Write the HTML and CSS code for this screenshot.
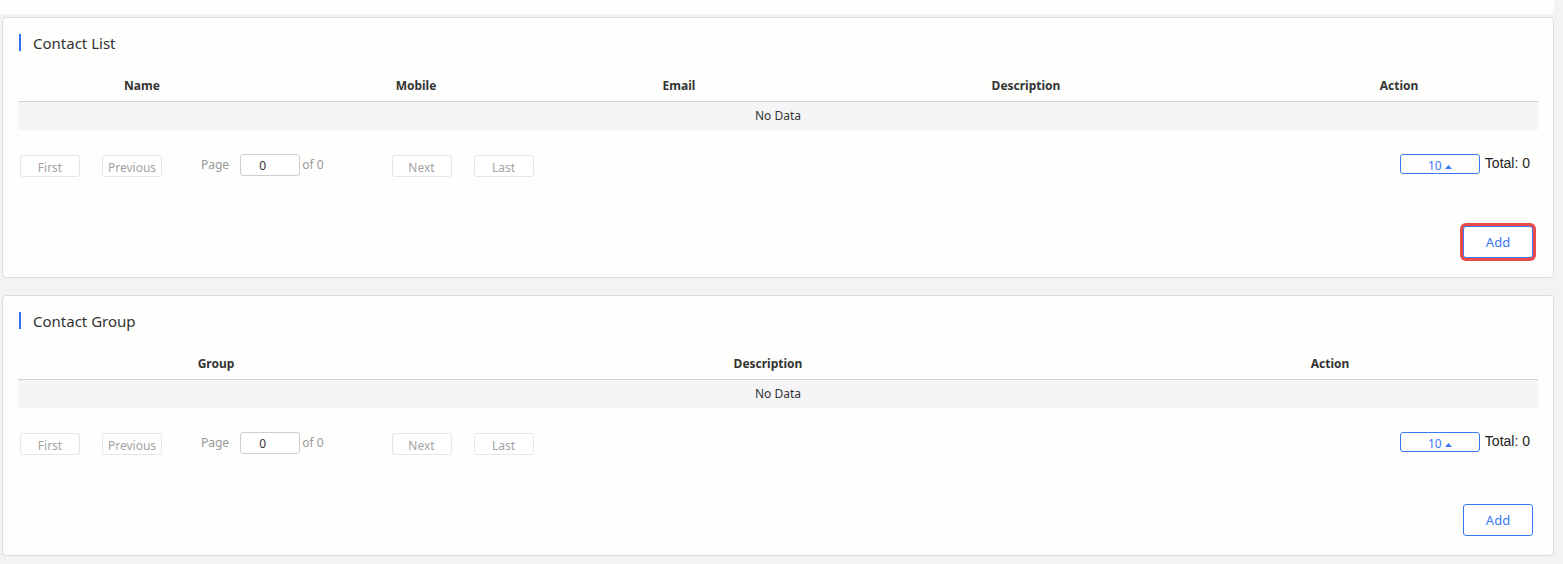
FILE: index.html
```html
<!DOCTYPE html>
<html lang="en">
<head>
    <meta charset="UTF-8">
    <meta name="viewport" content="width=device-width, initial-scale=1.0">
    <title>Contacts</title>
    <link rel="stylesheet" href="styles.css">
</head>
<body>
    <div class="top-strip"></div>

    <div class="card">
        <div class="card-title">Contact List</div>
        <table class="data-table">
            <colgroup>
                <col class="c-name">
                <col class="c-mobile">
                <col class="c-email">
                <col class="c-desc">
                <col class="c-action">
            </colgroup>
            <thead>
                <tr>
                    <th>Name</th>
                    <th>Mobile</th>
                    <th>Email</th>
                    <th>Description</th>
                    <th>Action</th>
                </tr>
            </thead>
            <tbody>
                <tr><td class="empty" colspan="5">No Data</td></tr>
            </tbody>
        </table>
        <div class="pager">
            <div class="pager-left">
                <button class="pg-btn">First</button>
                <button class="pg-btn prev">Previous</button>
                <span class="pg-label">Page</span>
                <input class="pg-input" type="text" value="0">
                <span class="pg-of">of 0</span>
                <button class="pg-btn next">Next</button>
                <button class="pg-btn last">Last</button>
            </div>
            <div class="pager-right">
                <div class="size-select">10 <svg width="7" height="4" viewBox="0 0 7 4"><path d="M0 4 L3.5 0 L7 4 Z" fill="#3a78f5"/></svg></div>
                <span class="total">Total: 0</span>
            </div>
        </div>
        <div class="actions">
            <button class="add-btn highlighted">Add</button>
        </div>
    </div>

    <div class="card">
        <div class="card-title">Contact Group</div>
        <table class="data-table">
            <colgroup>
                <col class="c-group">
                <col class="c-gdesc">
                <col class="c-gaction">
            </colgroup>
            <thead>
                <tr>
                    <th>Group</th>
                    <th>Description</th>
                    <th>Action</th>
                </tr>
            </thead>
            <tbody>
                <tr><td class="empty" colspan="3">No Data</td></tr>
            </tbody>
        </table>
        <div class="pager">
            <div class="pager-left">
                <button class="pg-btn">First</button>
                <button class="pg-btn prev">Previous</button>
                <span class="pg-label">Page</span>
                <input class="pg-input" type="text" value="0">
                <span class="pg-of">of 0</span>
                <button class="pg-btn next">Next</button>
                <button class="pg-btn last">Last</button>
            </div>
            <div class="pager-right">
                <div class="size-select">10 <svg width="7" height="4" viewBox="0 0 7 4"><path d="M0 4 L3.5 0 L7 4 Z" fill="#3a78f5"/></svg></div>
                <span class="total">Total: 0</span>
            </div>
        </div>
        <div class="actions">
            <button class="add-btn">Add</button>
        </div>
    </div>
</body>
</html>
```

FILE: styles.css
```css
body {
    margin: 0;
    padding: 0;
    background-color: #f3f3f3;
    font-family: "Noto Sans", "Open Sans", Arial, sans-serif;
    color: #333;
}

*,
*::before,
*::after {
    box-sizing: border-box;
}

.top-strip {
    height: 14px;
    margin-right: 9px;
    background: #fdfdfd;
}

.card {
    height: 261px;
    margin: 3px 9px 17px 2px;
    padding: 0 15px;
    background: #fefefd;
    border: 1px solid #dcdcdc;
    border-radius: 4px;
}

.card-title {
    margin: 16px 0 0 1px;
    height: 17px;
    padding-left: 12px;
    border-left: 2px solid #2f6ff3;
    display: flex;
    align-items: center;
    font-size: 15px;
    color: #333;
}

.data-table {
    width: 100%;
    margin-top: 20px;
    border-collapse: collapse;
    table-layout: fixed;
    font-size: 12px;
}

.c-name { width: 248px; }
.c-mobile { width: 300px; }
.c-email { width: 226px; }
.c-desc { width: 468px; }
.c-action { width: 278px; }

.c-group { width: 396px; }
.c-gdesc { width: 708px; }
.c-gaction { width: 416px; }

.data-table th {
    height: 30px;
    padding: 0;
    font-weight: bold;
    color: #333;
    text-align: center;
    border-bottom: 1px solid #d2d2d2;
}

.data-table td.empty {
    height: 29px;
    padding: 0;
    text-align: center;
    background: #f5f5f7;
    color: #333;
}

.pager {
    margin-top: 24px;
    display: flex;
    justify-content: space-between;
    align-items: flex-start;
    height: 24px;
}

.pager-left {
    display: flex;
    align-items: flex-start;
    padding-left: 2px;
}

.pg-btn {
    width: 60px;
    height: 22px;
    margin-top: 1px;
    padding: 3px 0 0;
    background: #fff;
    border: 1px solid #e6e6e6;
    border-radius: 3px;
    font-family: inherit;
    font-size: 12px;
    color: #a3a3a3;
    cursor: pointer;
}

.pg-btn.prev {
    margin-left: 22px;
}

.pg-btn.next {
    margin-left: 68px;
}

.pg-btn.last {
    margin-left: 22px;
}

.pg-label {
    margin-left: 39px;
    line-height: 22px;
    font-size: 12px;
    color: #999;
}

.pg-input {
    width: 60px;
    height: 22px;
    margin-left: 11px;
    padding: 0 0 0 18px;
    border: 1px solid #cfcfcf;
    border-radius: 3px;
    font-family: inherit;
    font-size: 12px;
    color: #333;
    background: #fff;
}

.pg-of {
    margin-left: 2px;
    line-height: 22px;
    font-size: 12px;
    color: #999;
}

.pager-right {
    display: flex;
    align-items: flex-start;
    padding-right: 8px;
}

.size-select {
    width: 80px;
    height: 20px;
    padding-top: 4px;
    border: 1px solid #3a78f5;
    border-radius: 3px;
    text-align: center;
    font-size: 12px;
    line-height: 14px;
    color: #3a78f5;
}

.size-select svg {
    vertical-align: 1px;
}

.total {
    margin-left: 5px;
    font-family: "Liberation Sans", Arial, sans-serif;
    font-size: 14px;
    line-height: 18px;
    color: #222;
}

.actions {
    margin-top: 48px;
    display: flex;
    justify-content: flex-end;
    padding-right: 5px;
}

.add-btn {
    width: 70px;
    height: 32px;
    background: #fff;
    border: 1px solid #3a78f5;
    border-radius: 3px;
    font-family: inherit;
    font-size: 13px;
    color: #3a78f5;
    cursor: pointer;
}

.add-btn.highlighted {
    box-shadow: 0 0 0 3px #e84a4a;
    border-radius: 3px;
}
```
